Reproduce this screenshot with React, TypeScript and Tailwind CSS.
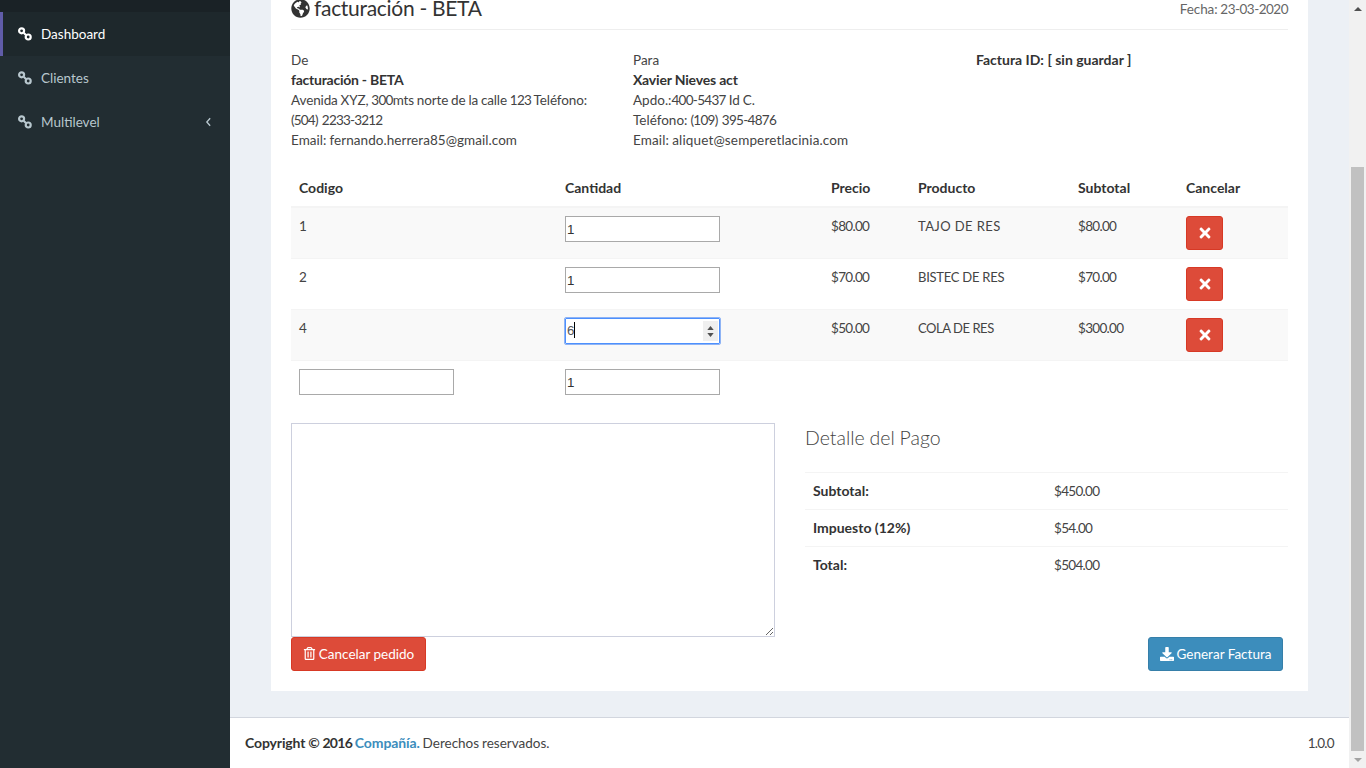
import React from "react";
import { FaGlobeAmericas, FaTimes, FaRegTrashAlt, FaDownload } from "react-icons/fa";

function Chain({ className }: { className?: string }) {
  return (
    <svg viewBox="0 0 14 14" className={className} fill="none" stroke="currentColor" strokeWidth="2.2">
      <circle cx="3.6" cy="3.8" r="2.5" />
      <circle cx="10.2" cy="10" r="2.5" />
      <path d="M5.6 5.7l2.6 2.5" strokeWidth="2" />
    </svg>
  );
}

function D({ children }: { children: React.ReactNode }) {
  return <span className="tracking-[-0.7px] [word-spacing:1.5px]">{children}</span>;
}

function NavItem({ label, active, arrow }: { label: string; active?: boolean; arrow?: boolean }) {
  return (
    <div
      className={
        "flex h-[44px] items-center border-l-[3px] pl-[15px] pr-[18px] text-[13.5px] " +
        (active ? "border-[#605ca8] bg-[#1e282c] text-white" : "border-transparent text-[#b8c7ce]")
      }
    >
      <Chain className="h-[14px] w-[14px]" />
      <span className="ml-[9px]">{label}</span>
      {arrow && (
        <svg viewBox="0 0 8 12" className="ml-auto h-[10px] w-[7px]" fill="none" stroke="currentColor" strokeWidth="1.6">
          <path d="M6 1.5L2 6l4 4.5" />
        </svg>
      )}
    </div>
  );
}

function QtyInput() {
  return (
    <input
      type="text"
      defaultValue="1"
      className="block h-[26px] w-[155px] border border-[#a9a9a9] bg-white px-[1px] font-['Liberation_Sans',sans-serif] text-[13.33px] text-[#333] outline-none"
    />
  );
}

function RemoveBtn() {
  return (
    <div className="flex h-[34px] w-[37px] items-center justify-center rounded-[3px] border border-[#d73925] bg-[#dd4b39] text-white">
      <FaTimes className="h-[16px] w-[16px]" />
    </div>
  );
}

const rows = [
  { c: "1", p: "$80.00", n: "TAJO DE RES", t: "tracking-[0.4px]", s: "$80.00" },
  { c: "2", p: "$70.00", n: "BISTEC DE RES", t: "tracking-[-0.25px]", s: "$70.00" },
  { c: "4", p: "$50.00", n: "COLA DE RES", t: "tracking-[-0.45px]", s: "$300.00" },
];

export default function App() {
  return (
    <div className="flex h-screen w-full overflow-hidden bg-[#ecf0f5] font-['Lato',sans-serif] text-[13.5px] leading-[20px] text-[#444] [word-spacing:-0.5px] [&_b]:text-[#333] [&_th]:text-[#333]">
      <aside className="w-[230px] shrink-0 bg-[#222d32]">
        <div className="h-[12px] bg-[#1a2226]" />
        <NavItem label="Dashboard" active />
        <NavItem label="Clientes" />
        <NavItem label="Multilevel" arrow />
      </aside>

      <div className="flex min-w-0 flex-1 flex-col">
        <main className="h-[717px] px-[41px]">
          <section className="h-[691px] bg-white px-[20px]">
            <header className="flex h-[30px] justify-between border-b border-[#eeeeee]">
              <h2 className="flex h-[16px] items-center text-[21px] leading-[22px] tracking-[-0.3px] text-[#333] [word-spacing:0px]">
                <FaGlobeAmericas className="mr-[4px] h-[19px] w-[19px] text-[#333]" />
                <span>facturación - BETA</span>
              </h2>
              <span className="leading-[18px] tracking-[-0.1px] text-[#666]">
                Fecha: <span className="tracking-[-0.5px]">23-03-2020</span>
              </span>
            </header>

            <div className="mt-[20px] flex">
              <div className="w-[342px]">
                De
                <br />
                <b className="text-[14px] tracking-[-0.25px] [word-spacing:0px]">facturación - BETA</b>
                <br />
                <span className="tracking-[-0.12px]">
                  Avenida XYZ, <D>300</D>mts norte de la calle <D>123</D> Teléfono:
                </span>
                <br />
                <span className="tracking-[-0.8px] [word-spacing:1.5px]">(504) 2233-3212</span>
                <br />
                <span className="tracking-[0.05px]">Email: fernando.herrera85@gmail.com</span>
              </div>
              <div className="w-[343px]">
                Para
                <br />
                <b className="text-[14px] tracking-[-0.18px] [word-spacing:0px]">Xavier Nieves act</b>
                <br />
                Apdo.:<D>400-5437</D> Id C.
                <br />
                Teléfono: <D>(109) 395-4876</D>
                <br />
                <span className="tracking-[0.15px]">Email: aliquet@semperetlacinia.com</span>
              </div>
              <div>
                <b className="text-[14px] [word-spacing:0px]">Factura ID: [ sin guardar ]</b>
              </div>
            </div>

            <table className="mt-[20px] w-[997px] table-fixed border-collapse text-left">
              <colgroup>
                <col className="w-[266px]" />
                <col className="w-[266px]" />
                <col className="w-[87px]" />
                <col className="w-[160px]" />
                <col className="w-[108px]" />
                <col className="w-[110px]" />
              </colgroup>
              <thead>
                <tr className="h-[37px] border-b-2 border-[#f4f4f4]">
                  {["Codigo", "Cantidad", "Precio", "Producto", "Subtotal", "Cancelar"].map((h) => (
                    <th key={h} className="px-[8px] text-[14px] font-bold">
                      {h}
                    </th>
                  ))}
                </tr>
              </thead>
              <tbody>
                {rows.map((r, i) => (
                  <tr key={r.c} className={"h-[51px] border-t border-[#f4f4f4] align-top " + (i % 2 === 0 ? "bg-[#f9f9f9]" : "bg-white")}>
                    <td className="p-[8px]">{r.c}</td>
                    <td className="p-[8px]">
                      {i === 2 ? (
                        <div className="relative h-[26px] w-[155px] rounded-[1px] border border-[#4d90fe] bg-white px-[1px] font-['Liberation_Sans',sans-serif] text-[13.33px] leading-[24px] text-[#555] outline outline-1 outline-[#8fb4f5]">
                          <span>6</span>
                          <span className="inline-block h-[16px] w-[1px] translate-y-[3px] bg-black" />
                          <div className="absolute right-[1px] top-[2px] flex h-[20px] w-[15px] flex-col items-center justify-center gap-[3px] bg-[#efefef]">
                            <svg viewBox="0 0 8 5" className="h-[4px] w-[7px] fill-[#505050]">
                              <path d="M4 0l4 5H0z" />
                            </svg>
                            <svg viewBox="0 0 8 5" className="h-[4px] w-[7px] fill-[#505050]">
                              <path d="M0 0h8L4 5z" />
                            </svg>
                          </div>
                        </div>
                      ) : (
                        <QtyInput />
                      )}
                    </td>
                    <td className="p-[8px]">
                      <D>{r.p}</D>
                    </td>
                    <td className={"p-[8px] text-[13px] [word-spacing:0px] " + r.t}>{r.n}</td>
                    <td className="p-[8px]">
                      <D>{r.s}</D>
                    </td>
                    <td className="p-[8px]">
                      <RemoveBtn />
                    </td>
                  </tr>
                ))}
                <tr className="h-[51px] border-t border-[#f4f4f4] align-top">
                  <td className="p-[8px]">
                    <input className="block h-[26px] w-[155px] border border-[#a9a9a9] bg-white outline-none" />
                  </td>
                  <td className="p-[8px]">
                    <QtyInput />
                  </td>
                  <td colSpan={4} />
                </tr>
              </tbody>
            </table>

            <div className="mt-[11px] flex">
              <div className="w-[514px]">
                <textarea className="block h-[214px] w-[484px] border border-[#cdd0de] bg-white outline-none" />
                <button className="flex h-[34px] w-[135px] items-center justify-center rounded-[3px] border border-[#d73925] bg-[#dd4b39] text-white">
                  <FaRegTrashAlt className="mr-[3px] h-[13px] w-[13px]" />
                  Cancelar pedido
                </button>
              </div>
              <div className="w-[483px]">
                <p className="mt-[4px] text-[19.5px] font-light leading-[22px] text-[#444]">Detalle del Pago</p>
                <div className="mt-[23px]">
                  {[
                    ["Subtotal:", "$450.00"],
                    ["Impuesto (12%)", "$54.00"],
                    ["Total:", "$504.00"],
                  ].map(([a, b]) => (
                    <div key={a} className="flex h-[37px] items-center border-t border-[#f4f4f4] pl-[8px]">
                      <b className="w-[241px] text-[14px] [word-spacing:0px]">{a}</b>
                      <D>{b}</D>
                    </div>
                  ))}
                </div>
                <div className="mt-[54px] flex justify-end pr-[5px]">
                  <button className="flex h-[34px] w-[135px] items-center justify-center rounded-[3px] border border-[#367fa9] bg-[#3c8dbc] text-white">
                    <FaDownload className="mr-[3px] h-[14px] w-[14px]" />
                    Generar Factura
                  </button>
                </div>
              </div>
            </div>
          </section>
        </main>
        <footer className="flex h-[51px] items-center justify-between border-t border-[#d2d6de] bg-white px-[15px]">
          <span>
            <b className="text-[14px] tracking-[-0.12px]">
              Copyright © <D>2016</D> <span className="text-[#3c8dbc]">Compañía.</span>
            </b>{" "}
            Derechos reservados.
          </span>
          <D>1.0.0</D>
        </footer>
      </div>

      <div className="flex h-full w-[17px] shrink-0 flex-col items-center bg-[#f1f1f1]">
        <div className="flex h-[17px] w-full items-center justify-center">
          <svg viewBox="0 0 8 4" className="h-[4px] w-[8px] fill-[#505050]">
            <path d="M4 0l4 4H0z" />
          </svg>
        </div>
        <div className="mt-[150px] h-[584px] w-[13px] bg-[#c1c1c1]" />
        <div className="flex h-[17px] w-full items-center justify-center">
          <svg viewBox="0 0 8 4" className="h-[4px] w-[8px] fill-[#a3a3a3]">
            <path d="M0 0h8L4 4z" />
          </svg>
        </div>
      </div>
    </div>
  );
}
